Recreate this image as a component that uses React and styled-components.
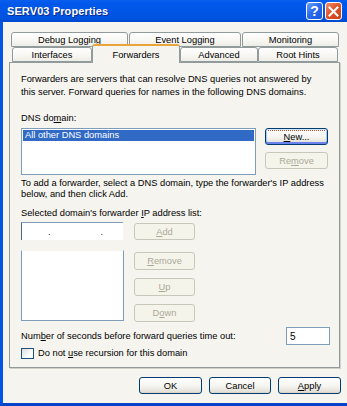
import React from 'react';
import styled, { createGlobalStyle } from 'styled-components';

const GlobalStyle = createGlobalStyle`
  html, body { margin: 0; padding: 0; width: 347px; height: 406px; overflow: hidden; background: #F5F4EF; }
  * { box-sizing: border-box; }
`;

const Window = styled.div`
  width: 347px;
  height: 406px;
  display: flex;
  flex-direction: column;
  font-family: "Liberation Sans", Arial, sans-serif;
  font-size: 9.3px;
  color: #000;
`;

const TitleBar = styled.div`
  height: 22px;
  flex: none;
  display: flex;
  align-items: center;
  justify-content: space-between;
  padding: 0 5px 0 7px;
  background: linear-gradient(#0A5FEE, #0058EB 15%, #0055E5 55%, #0052DE 85%, #0048CC);
`;

const Title = styled.div`
  color: #fff;
  font-weight: bold;
  font-size: 11px;
  letter-spacing: 0.1px;
  text-shadow: 1px 1px 0 #0B2B8A;
`;

const Controls = styled.div`
  display: flex;
  gap: 2px;
`;

const CaptionButton = styled.div`
  width: 17px;
  height: 18px;
  border: 1px solid #fff;
  border-radius: 3px;
  display: flex;
  align-items: center;
  justify-content: center;
  color: #fff;
  font-weight: bold;
  font-size: 14px;
  font-family: "Liberation Sans", Arial, sans-serif;
  background: ${p => p.$kind === 'close'
    ? 'linear-gradient(135deg, #F08F6E, #E0552D 45%, #C93D18)'
    : 'linear-gradient(135deg, #6FA4FB, #2A6CF0 45%, #1A56DA)'};
`;

const Client = styled.div`
  flex: 1;
  display: flex;
  flex-direction: column;
  border-left: 3px solid #0055E5;
  border-bottom: 3px solid #0842C8;
  background: #F5F4EF;
  padding: 10px 0 0 6px;
`;

const TabStrip = styled.div`
  display: flex;
  flex-direction: column;
  width: 331px;
`;

const TabRow = styled.div`
  display: flex;
  align-items: flex-end;
  height: 15px;
  gap: ${p => p.$gap}px;
  padding-left: ${p => p.$indent}px;
`;

const Tab = styled.div`
  width: ${p => p.$w}px;
  height: ${p => (p.$selected ? 19 : 15)}px;
  margin-bottom: ${p => (p.$selected ? -1 : 0)}px;
  position: relative;
  z-index: ${p => (p.$selected ? 2 : 1)};
  display: flex;
  align-items: center;
  justify-content: center;
  border: 1px solid #919B9C;
  border-bottom: ${p => (p.$selected ? 'none' : '1px solid #919B9C')};
  border-top: ${p => (p.$selected ? '2px solid #E9A53A' : '1px solid #919B9C')};
  border-radius: 3px 3px 0 0;
  background: ${p => (p.$selected ? '#F5F4EF' : 'linear-gradient(#FFFFFF, #F7F6F2 60%, #EDECE6)')};
  font-size: 9.3px;
  padding-top: ${p => (p.$selected ? 0 : 1)}px;
`;

const Panel = styled.div`
  width: 331px;
  height: 306px;
  border: 1px solid #919B9C;
  box-shadow: 1px 1px 0 #D3D1C6;
  background: #F5F4EF;
  padding: 10px 9px 0 11px;
  display: flex;
  flex-direction: column;
`;

const Text = styled.div`
  line-height: ${p => p.$lh || 12}px;
  margin-top: ${p => p.$mt || 0}px;
  white-space: nowrap;
`;

const U = styled.span`
  text-decoration: underline;
`;

const Row = styled.div`
  display: flex;
  align-items: flex-start;
  gap: ${p => p.$gap || 0}px;
  margin-top: ${p => p.$mt || 0}px;
`;

const ListBox = styled.div`
  width: ${p => p.$w}px;
  height: ${p => p.$h}px;
  border: 1px solid #7F9DB9;
  border-top-color: ${p => (p.$openTop ? '#F5F4EF' : '#7F9DB9')};
  background: #FFFFFF;
  padding: 1px;
`;

const ListItem = styled.div`
  height: 11px;
  line-height: 11px;
  padding-left: 2px;
  background: #316AC5;
  color: #fff;
`;

const ButtonColumn = styled.div`
  display: flex;
  flex-direction: column;
  gap: ${p => p.$gap}px;
  padding-top: ${p => p.$pt || 0}px;
`;

const Button = styled.div`
  position: relative;
  width: ${p => p.$w}px;
  height: ${p => p.$h || 17}px;
  margin-top: ${p => p.$mt || 0}px;
  border: 1px solid ${p => (p.$disabled ? '#C9C7BA' : '#003C74')};
  border-radius: 3px;
  display: flex;
  align-items: center;
  justify-content: center;
  color: ${p => (p.$disabled ? '#ACA899' : '#000')};
  background: ${p => (p.$disabled ? '#F5F4EA' : 'linear-gradient(#FFFFFF, #F5F4F0 55%, #E3E1D8 90%, #D6D0C5)')};
  box-shadow: ${p => (p.$default
    ? 'inset 0 1px 0 #CEE7FF, inset 0 -2px 0 #6982EE, inset 1px 0 0 #A8C8F8, inset -1px 0 0 #A8C8F8'
    : 'none')};
  &::after {
    content: '';
    display: ${p => (p.$default ? 'block' : 'none')};
    position: absolute;
    inset: 1px 2px 3px 2px;
    border-top: 1px dotted #C0502A;
  }
`;

const IpInput = styled.div`
  width: 102px;
  height: 18px;
  border-top: 1px solid #7F9DB9;
  border-left: 1px solid #55657A;
  background: #FFFFFF;
  display: flex;
  align-items: center;
  font-size: 9px;
`;

const IpSegment = styled.span`
  width: ${p => p.$w}px;
  flex: none;
`;

const TimeoutRow = styled.div`
  display: flex;
  align-items: center;
  justify-content: space-between;
  margin-top: 5px;
  height: 18px;
`;

const TimeoutInput = styled.div`
  width: 44px;
  height: 18px;
  border: 1px solid #7F9DB9;
  background: #FFFFFF;
  padding-left: 3px;
  display: flex;
  align-items: center;
  font-size: 10px;
`;

const CheckRow = styled.div`
  display: flex;
  align-items: center;
  gap: 4px;
  margin-top: 2px;
`;

const CheckBox = styled.div`
  width: 13px;
  height: 11px;
  border: 1px solid #1C5180;
  background: linear-gradient(135deg, #DCDCD7, #FFFFFF 70%);
`;

const DialogButtons = styled.div`
  display: flex;
  justify-content: flex-end;
  gap: 7px;
  width: 332px;
  margin-top: 9px;
`;

const CloseIcon = () => (
  <svg width="11" height="11" viewBox="0 0 11 11">
    <path d="M1.5 1.5 L9.5 9.5 M9.5 1.5 L1.5 9.5" stroke="#fff" strokeWidth="2" strokeLinecap="square" />
  </svg>
);

export default function App() {
  return (
    <>
      <GlobalStyle />
      <Window>
        <TitleBar>
          <Title>SERV03 Properties</Title>
          <Controls>
            <CaptionButton $kind="help">?</CaptionButton>
            <CaptionButton $kind="close"><CloseIcon /></CaptionButton>
          </Controls>
        </TitleBar>
        <Client>
          <TabStrip>
            <TabRow $gap={1} $indent={2}>
              <Tab $w={117}>Debug Logging</Tab>
              <Tab $w={112}>Event Logging</Tab>
              <Tab $w={97}>Monitoring</Tab>
            </TabRow>
            <TabRow $gap={0} $indent={3}>
              <Tab $w={80}>Interfaces</Tab>
              <Tab $w={88} $selected>Forwarders</Tab>
              <Tab $w={78}>Advanced</Tab>
              <Tab $w={80}>Root Hints</Tab>
            </TabRow>
          </TabStrip>
          <Panel>
            <Text $lh={13}>
              Forwarders are servers that can resolve DNS queries not answered by<br />
              this server. Forward queries for names in the following DNS domains.
            </Text>
            <Text $mt={13}>DNS do<U>m</U>ain:</Text>
            <Row $gap={9} $mt={4}>
              <ListBox $w={235} $h={47}>
                <ListItem>All other DNS domains</ListItem>
              </ListBox>
              <ButtonColumn $gap={7}>
                <Button $w={63} $default><U>N</U>ew...</Button>
                <Button $w={63} $disabled>Re<U>m</U>ove</Button>
              </ButtonColumn>
            </Row>
            <Text $lh={11} $mt={3}>
              To add a forwarder, select a DNS domain, type the forwarder's IP address<br />
              below, and then click Add.
            </Text>
            <Text $mt={7}>Selected domain's forwarder <U>I</U>P address list:</Text>
            <Row $gap={11} $mt={3}>
              <IpInput>
                <IpSegment $w={26} />.<IpSegment $w={50} />.
              </IpInput>
              <Button $w={61} $mt={1} $disabled><U>A</U>dd</Button>
            </Row>
            <Row $gap={10} $mt={10}>
              <ListBox $w={103} $h={71} $openTop />
              <ButtonColumn $gap={8} $pt={2}>
                <Button $w={61} $h={18} $disabled><U>R</U>emove</Button>
                <Button $w={61} $h={18} $disabled><U>U</U>p</Button>
                <Button $w={61} $h={18} $disabled>D<U>o</U>wn</Button>
              </ButtonColumn>
            </Row>
            <TimeoutRow>
              <Text>Num<U>b</U>er of seconds before forward queries time out:</Text>
              <TimeoutInput>5</TimeoutInput>
            </TimeoutRow>
            <CheckRow>
              <CheckBox />
              <Text>Do not <U>u</U>se recursion for this domain</Text>
            </CheckRow>
          </Panel>
          <DialogButtons>
            <Button $w={63}>OK</Button>
            <Button $w={62}>Cancel</Button>
            <Button $w={63}><U>A</U>pply</Button>
          </DialogButtons>
        </Client>
      </Window>
    </>
  );
}
